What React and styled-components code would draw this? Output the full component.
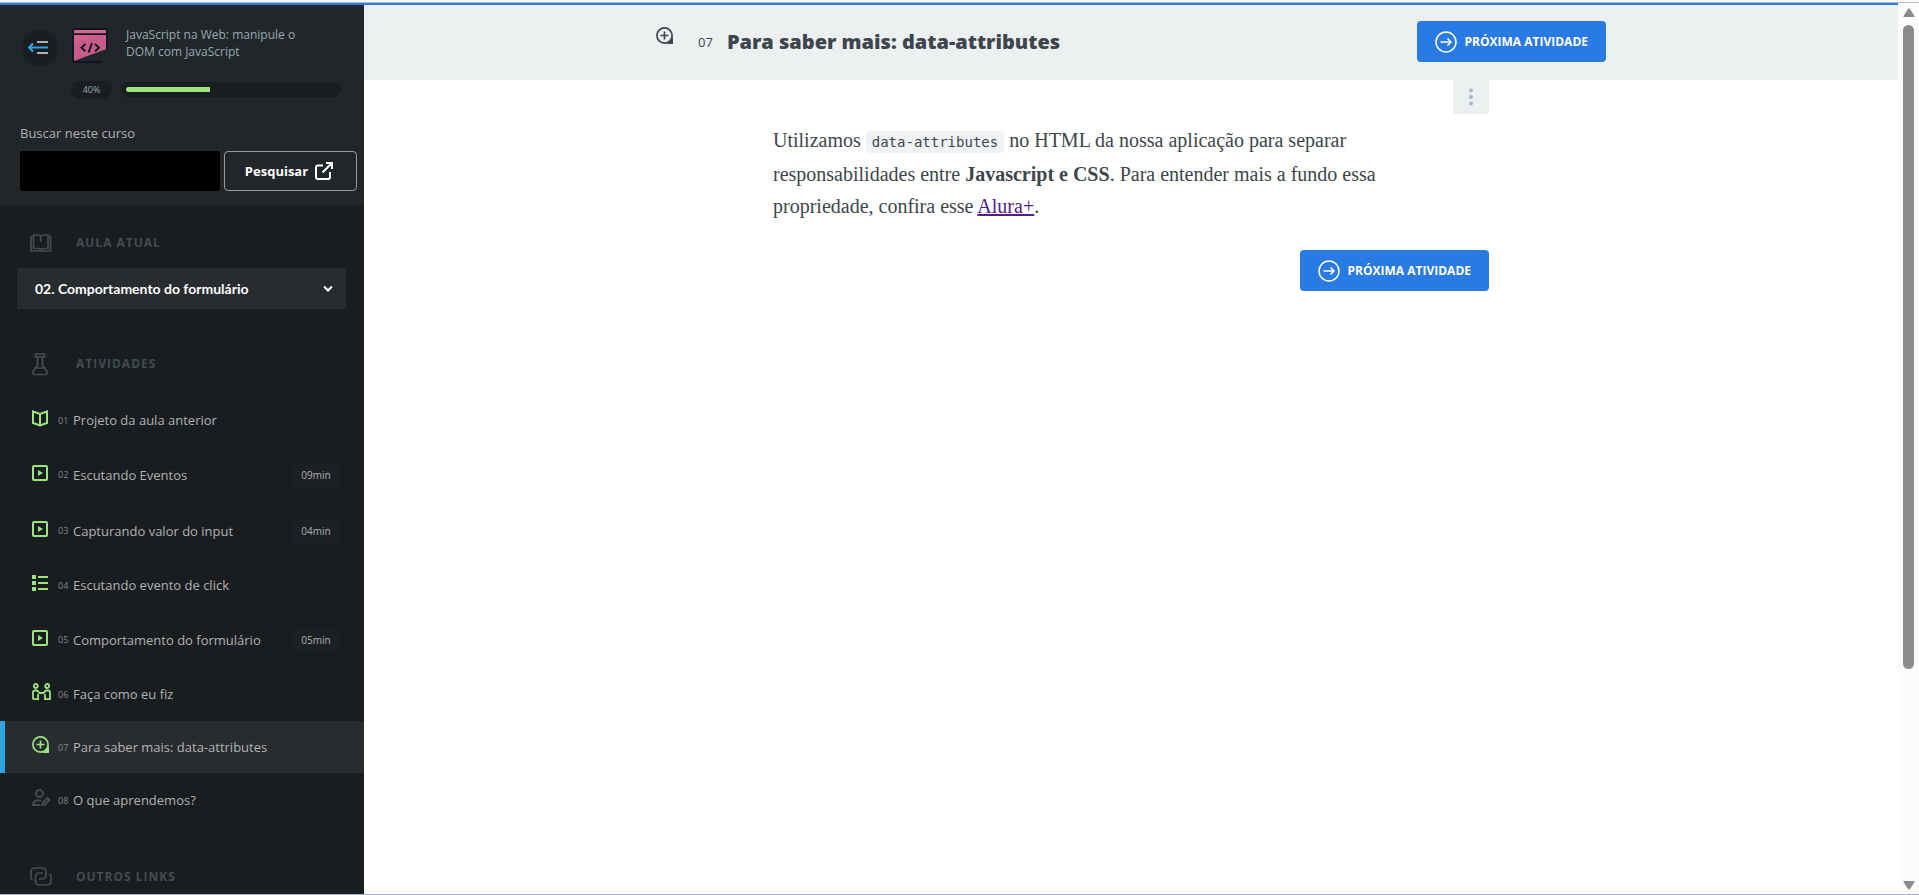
import React from 'react';
import styled, { createGlobalStyle, css } from 'styled-components';

const sans = "'Open Sans', 'Noto Sans', sans-serif";
const serif = "'Source Serif Pro', 'Liberation Serif', serif";

const colors = {
  sidebar: '#191d1f',
  sidebarTop: '#222628',
  sidebarActive: '#282c2f',
  sidebarMuted: '#434c51',
  sidebarText: '#b2b2b2',
  green: '#9be57f',
  lightBlue: '#2fa4e2',
  blue: '#2a7ae4',
  gray: '#ecf0f1',
  text: '#3d464d',
};

const GlobalStyle = createGlobalStyle`
  *,
  *::before,
  *::after {
    box-sizing: border-box;
  }

  body {
    margin: 0;
    background: #fff;
    font-family: ${sans};
    color: ${colors.text};
  }

  button,
  input,
  select {
    margin: 0;
    font-family: inherit;
  }
`;

const Page = styled.div`
  height: 100vh;
  display: flex;
  flex-direction: column;
  overflow: hidden;
  border-bottom: 1px solid #a9b0c8;
`;

const WindowEdge = styled.div`
  flex: none;
  height: 3px;
  background: #f9f9f9;
  border-bottom: 1px solid #bdbdbd;
`;

const Body = styled.div`
  flex: 1;
  min-height: 0;
  display: flex;
`;

const Course = styled.div`
  flex: 1;
  min-width: 0;
  display: flex;
  border-top: 2px solid ${colors.blue};
`;

/* Sidebar */

const Sidebar = styled.aside`
  flex: none;
  width: 364px;
  overflow: hidden;
  background: ${colors.sidebar};
`;

const SidebarTop = styled.div`
  padding: 21px 7px 15px 20px;
  background: ${colors.sidebarTop};
`;

const CourseInfo = styled.div`
  display: flex;
  padding-left: 2px;
`;

const ToggleButton = styled.button`
  flex: none;
  width: 36px;
  height: 36px;
  margin: 4px 14px 0 0;
  padding: 0;
  border: 0;
  border-radius: 50%;
  background: ${colors.sidebar};
  svg {
    display: block;
    margin: 0 auto;
  }
`;

const CourseName = styled.a`
  width: 190px;
  margin-left: 18px;
  font-size: 12px;
  line-height: 17px;
  color: #95a9b3;
  text-decoration: none;
`;

const Progress = styled.div`
  display: flex;
  align-items: center;
  gap: 9px;
  margin: 15px 16px 0 51px;
`;

const ProgressLabel = styled.span`
  width: 41px;
  border-radius: 9px;
  background: ${colors.sidebar};
  font-size: 9px;
  line-height: 17px;
  text-align: center;
  color: #95a9b3;
`;

const ProgressTrack = styled.div`
  flex: 1;
  padding: 5px;
  border-radius: 8px;
  background: ${colors.sidebar};
`;

const ProgressBar = styled.div`
  height: 5px;
  border-radius: 3px 0 0 3px;
  background: ${colors.green};
`;

const SearchForm = styled.form`
  display: flex;
  flex-wrap: wrap;
  gap: 4px;
  margin-top: 26px;
`;

const SearchLabel = styled.label`
  width: 100%;
  padding-bottom: 4px;
  font-size: 13px;
  line-height: 19px;
  color: ${colors.sidebarText};
`;

const SearchInput = styled.input`
  flex: 1;
  min-width: 0;
  height: 40px;
  padding: 0 12px;
  border: 0;
  border-radius: 3px;
  background: #000;
  color: #fff;
`;

const SearchButton = styled.button`
  display: flex;
  align-items: center;
  justify-content: center;
  gap: 6px;
  width: 133px;
  height: 40px;
  padding: 0 2px 0 0;
  border: 1px solid #989a9b;
  border-radius: 4px;
  background: transparent;
  font-size: 13px;
  font-weight: 700;
  color: #fff;
`;

const SectionTitle = styled.h2`
  display: flex;
  align-items: center;
  margin: 0;
  padding-left: 30px;
  font-size: 12px;
  font-weight: 700;
  line-height: 24px;
  letter-spacing: 1px;
  text-transform: uppercase;
  color: ${colors.sidebarMuted};
  svg {
    flex: none;
    margin-right: 24px;
  }
`;

const CurrentClass = styled.section`
  padding: 25px 18px 43px 0;
`;

const SelectBox = styled.div`
  display: grid;
  align-items: center;
  margin: 13px 0 0 17px;
  background: ${colors.sidebarActive};
  select,
  svg {
    grid-area: 1 / 1;
  }
  svg {
    justify-self: end;
    margin-right: 12px;
    pointer-events: none;
  }
`;

const ClassSelect = styled.select`
  width: 100%;
  height: 41px;
  padding: 0 32px 0 18px;
  border: 0;
  background: transparent;
  appearance: none;
  font-family: Lato, ${sans};
  font-size: 14px;
  font-weight: 700;
  color: #fff;
`;

const TaskList = styled.ul`
  display: grid;
  gap: 1px;
  margin: 18px 0 39px;
  padding: 0;
  list-style: none;
`;

const TaskLink = styled.a`
  display: flex;
  align-items: center;
  height: ${({ $timed }) => ($timed ? 55 : 52)}px;
  padding: 0 24px 0 32px;
  font-size: 13px;
  color: ${colors.sidebarText};
  text-decoration: none;
  ${({ $active }) => $active && css`
    background: ${colors.sidebarActive};
    border-left: 5px solid ${colors.lightBlue};
    padding-left: 27px;
  `}
`;

const TaskIcon = styled.span`
  flex: none;
  width: 26px;
  padding-bottom: 4px;
  line-height: 0;
  color: ${({ $done }) => ($done ? colors.green : colors.sidebarMuted)};
`;

const TaskNumber = styled.span`
  width: 15px;
  font-size: 9px;
  color: #83898c;
`;

const TaskDuration = styled.time`
  width: 48px;
  margin-left: auto;
  border-radius: 2px;
  background: #1c2023;
  font-size: 10px;
  line-height: 24px;
  text-align: center;
`;

/* Main content */

const Main = styled.main`
  flex: 1;
  min-width: 0;
  background: #fff;
`;

const TaskHeader = styled.header`
  padding: 16px 24px 18px;
  background: ${colors.gray};
`;

const HeaderContent = styled.div`
  display: flex;
  align-items: center;
  max-width: 950px;
  margin: 0 auto;
  > svg {
    margin-bottom: 11px;
  }
`;

const HeaderNumber = styled.span`
  margin: 0 14px 0 24px;
  font-size: 13px;
`;

const HeaderTitle = styled.h1`
  flex: 1;
  margin: 0;
  font-size: 20px;
  font-weight: 800;
  line-height: 28px;
`;

const NextLink = styled.a`
  display: inline-flex;
  align-items: center;
  gap: 8px;
  height: 41px;
  padding: 0 18px;
  border-radius: 4px;
  background: ${colors.blue};
  font-size: 12px;
  font-weight: 700;
  text-transform: uppercase;
  text-decoration: none;
  color: #fff;
`;

const Content = styled.div`
  display: flex;
  flex-direction: column;
  align-items: flex-end;
  max-width: 716px;
  margin: 0 auto;
`;

const MenuButton = styled.button`
  width: 36px;
  height: 34px;
  padding: 0;
  border: 0;
  border-radius: 0 0 3px 3px;
  background: ${colors.gray};
  svg {
    display: block;
    margin: 0 auto;
  }
`;

const Paragraph = styled.p`
  align-self: flex-start;
  max-width: 620px;
  margin: 10px 0 28px;
  font-family: ${serif};
  font-size: 20px;
  line-height: 32px;
  a {
    color: #551a8b;
  }
`;

const Code = styled.code`
  padding: 3px 6px;
  border-radius: 4px;
  background: #eff3f5;
  font-family: 'DejaVu Sans Mono', monospace;
  font-size: 14px;
`;

/* Page scroll bar */

const ScrollBar = styled.div`
  flex: none;
  display: flex;
  flex-direction: column;
  align-items: center;
  width: 21px;
  padding: 5px 0 4px;
  background: #fcfcfc;
`;

const ScrollTrack = styled.div`
  flex: 1;
  width: 11px;
  margin: 8px 0;
`;

const ScrollThumb = styled.div`
  border-radius: 6px;
  background: #8b8b8b;
`;

/* Icons */

const MenuFoldIcon = () => (
  <svg width="24" height="16" viewBox="1 0 24 16" fill="none">
    <path d="M10 2h11M10 13h11" stroke="#b2b2b2" strokeWidth="1.8" />
    <path d="M2 7.5h19M6 3.5l-4 4 4 4" stroke={colors.lightBlue} strokeWidth="2.2" />
  </svg>
);

const CourseLogo = () => (
  <svg width="36" height="38" viewBox="0 -2 36 38" fill="none">
    <path d="M1.5 2h33v19L2 33z" fill="#c75d86" />
    <path d="M2 2h32v4H2z" fill="#d9658f" />
    <path d="M2 7h26L2 15z" fill="#d9658f" opacity="0.6" />
    <path d="M35 22V3q0-2-2-2H3Q1 1 1 3v29q0 2 2 2h27M1 6.2h34" stroke="#0b1726" strokeWidth="1.8" />
    <path d="M13.5 16l-4 3.700 4 3.700M23 16l4 3.700-4 3.700M20 15l-3.400 9.500" stroke="#0b1726" strokeWidth="1.900" />
  </svg>
);

const ExternalIcon = () => (
  <svg width="20" height="20" viewBox="0 0 20 20" fill="none" stroke="#fff" strokeWidth="2">
    <path d="M9 4.5H4a2 2 0 0 0-2 2V16a2 2 0 0 0 2 2h10a2 2 0 0 0 2-2v-5M12 2h6v6M18 2L8.5 11.5" />
  </svg>
);

const CaretIcon = () => (
  <svg width="12" height="10" viewBox="0 0 12 10" fill="none">
    <path d="M2 2.5l4 4 4-4" stroke="#fff" strokeWidth="2" />
  </svg>
);

const BookIcon = () => (
  <svg width="22" height="20" viewBox="0 0 22 20" fill="none" stroke="currentColor" strokeWidth="1.7">
    <path d="M3.5 3.5H1V18h19.500V3.500H18" />
    <path d="M10.700 3.500Q10 2 8 2H3.500v13.500H9l1.700 1 1.700-1H18V2h-4.500q-2 0-2.800 1.500zV9" />
  </svg>
);

const FlaskIcon = () => (
  <svg width="22" height="24" viewBox="0 0 22 24" fill="none" stroke="currentColor" strokeWidth="1.7">
    <path d="M5.500 2h9v3h-9zM7.500 5v8L3 19.500q-1 3 1.500 3h11q2.500 0 1.500-3L12.500 13V5M5.500 16h9" />
  </svg>
);

const LinksIcon = () => (
  <svg width="22" height="20" viewBox="0 0 22 20" fill="none" stroke="currentColor" strokeWidth="1.7">
    <path d="M2.500 13Q1 12 1 10V5q0-4 4-4h7q4 0 4 4v3q0 4-4 4H9" />
    <path d="M13 6H9.500Q5.500 6 5.500 10v4q0 4 4 4H17q4 0 4-4v-4q0-2-1.500-3" />
  </svg>
);

const OpenBookIcon = () => (
  <svg width="16" height="18" viewBox="0 0 16 18" fill="none" stroke="currentColor" strokeWidth="2">
    <path d="M1 2.500L8 5l7-2.500v11.500L8 16.500 1 14zM8 5v11" />
  </svg>
);

const VideoIcon = () => (
  <svg width="16" height="16" viewBox="0 0 16 16" fill="none">
    <rect x="1" y="1" width="14" height="14" rx="1" stroke="currentColor" strokeWidth="2" />
    <path d="M6 5l5 3-5 3z" fill="currentColor" />
  </svg>
);

const ListIcon = () => (
  <svg width="16" height="16" viewBox="0 0 16 16" fill="currentColor">
    <path d="M0 0h4v4H0zM0 6h4v4H0zM0 12h4v4H0zM6 1h10v2H6zM6 7h10v2H6zM6 13h10v2H6z" />
  </svg>
);

const PeopleIcon = () => (
  <svg width="19" height="18" viewBox="0 0 19 18" fill="none" stroke="currentColor" strokeWidth="1.8">
    <circle cx="3.8" cy="3" r="2" />
    <circle cx="15.200" cy="3" r="2" />
    <path d="M1 16.200V9.500q0-2 2-2h1.500q1 0 1.500 1l1.500 1.500h4L13 8.500q.5-1 1.500-1H16q2 0 2 2v6.700h-5V11M1 16.200h5V11" />
  </svg>
);

const PlusBubbleIcon = () => (
  <svg width="18" height="18" viewBox="0 0 18 18" fill="none" stroke="currentColor" strokeWidth="1.7">
    <circle cx="8.5" cy="8.5" r="7.600" />
    <path d="M8.500 4.500v8M4.500 8.500h8" />
    <path d="M17 9v8H9q6-1 8-8z" fill="currentColor" stroke="none" />
  </svg>
);

const PersonEditIcon = () => (
  <svg width="19" height="18" viewBox="0 0 19 18" fill="none" stroke="currentColor" strokeWidth="2">
    <circle cx="7.5" cy="4.5" r="3.500" />
    <path d="M9 11.500H5.500Q1.500 11.500 1 16h7.500" />
    <path d="M11 13.500l4.500-4.500 2 2-4.500 4.500-2.500.5z" />
  </svg>
);

const NextIcon = () => (
  <svg width="22" height="22" viewBox="0 0 22 22" fill="none" stroke="#fff" strokeWidth="1.5">
    <circle cx="11" cy="11" r="10" />
    <path d="M5.500 11H16M12.500 7.500L16 11l-3.500 3.500" />
  </svg>
);

const DotsIcon = () => (
  <svg width="4" height="18" viewBox="0 0 4 18" fill="#a3b7c1">
    <circle cx="2" cy="2.5" r="2" />
    <circle cx="2" cy="9" r="2" />
    <circle cx="2" cy="15.5" r="2" />
  </svg>
);

const ArrowIcon = ({ down }) => (
  <svg width="12" height="9" viewBox="0 0 12 9" fill="#8b8b8b">
    <path d={down ? 'M1 0h10q1 0 .5 1L7 8q-1 1.500-2 0L.5 1Q0 0 1 0z' : 'M1 9h10q1 0 .5-1L7 1Q6-.5 5 1L.5 8Q0 9 1 9z'} />
  </svg>
);

const tasks = [
  { number: '01', name: 'Projeto da aula anterior', Icon: OpenBookIcon, done: true },
  { number: '02', name: 'Escutando Eventos', Icon: VideoIcon, done: true, duration: '09min' },
  { number: '03', name: 'Capturando valor do input', Icon: VideoIcon, done: true, duration: '04min' },
  { number: '04', name: 'Escutando evento de click', Icon: ListIcon, done: true },
  { number: '05', name: 'Comportamento do formulário', Icon: VideoIcon, done: true, duration: '05min' },
  { number: '06', name: 'Faça como eu fiz', Icon: PeopleIcon, done: true },
  { number: '07', name: 'Para saber mais: data-attributes', Icon: PlusBubbleIcon, done: true, active: true },
  { number: '08', name: 'O que aprendemos?', Icon: PersonEditIcon },
];

const Task = ({ number, name, Icon, done, active, duration }) => (
  <li>
    <TaskLink href="#" $active={active} $timed={Boolean(duration)}>
      <TaskIcon $done={done}><Icon /></TaskIcon>
      <TaskNumber>{number}</TaskNumber>
      <span>{name}</span>
      {duration && <TaskDuration>{duration}</TaskDuration>}
    </TaskLink>
  </li>
);

const NextActivity = () => (
  <NextLink href="#">
    <NextIcon />
    Próxima Atividade
  </NextLink>
);

const CourseSidebar = ({ progress }) => (
  <Sidebar>
    <SidebarTop>
      <CourseInfo>
        <ToggleButton type="button"><MenuFoldIcon /></ToggleButton>
        <CourseLogo />
        <CourseName href="#">JavaScript na Web: manipule o DOM com JavaScript</CourseName>
      </CourseInfo>
      <Progress>
        <ProgressLabel>{progress}%</ProgressLabel>
        <ProgressTrack>
          <ProgressBar style={{ width: `${progress}%` }} />
        </ProgressTrack>
      </Progress>
      <SearchForm>
        <SearchLabel htmlFor="search">Buscar neste curso</SearchLabel>
        <SearchInput id="search" type="text" />
        <SearchButton type="button">
          Pesquisar
          <ExternalIcon />
        </SearchButton>
      </SearchForm>
    </SidebarTop>
    <CurrentClass>
      <SectionTitle as="label" htmlFor="class"><BookIcon />Aula atual</SectionTitle>
      <SelectBox>
        <ClassSelect id="class">
          <option>02. Comportamento do formulário</option>
        </ClassSelect>
        <CaretIcon />
      </SelectBox>
    </CurrentClass>
    <SectionTitle><FlaskIcon />Atividades</SectionTitle>
    <TaskList>
      {tasks.map(task => <Task key={task.number} {...task} />)}
    </TaskList>
    <SectionTitle><LinksIcon />Outros links</SectionTitle>
  </Sidebar>
);

const App = () => (
  <Page>
    <GlobalStyle />
    <WindowEdge />
    <Body>
      <Course>
        <CourseSidebar progress={40} />
        <Main>
          <TaskHeader>
            <HeaderContent>
              <PlusBubbleIcon />
              <HeaderNumber>07</HeaderNumber>
              <HeaderTitle>Para saber mais: data-attributes</HeaderTitle>
              <NextActivity />
            </HeaderContent>
          </TaskHeader>
          <Content>
            <MenuButton type="button"><DotsIcon /></MenuButton>
            <Paragraph>
              Utilizamos <Code>data-attributes</Code> no HTML da nossa aplicação para separar
              responsabilidades entre <strong>Javascript e CSS</strong>. Para entender mais a fundo essa
              propriedade, confira esse <a href="#">Alura+</a>.
            </Paragraph>
            <NextActivity />
          </Content>
        </Main>
      </Course>
      <ScrollBar>
        <ArrowIcon />
        <ScrollTrack>
          <ScrollThumb style={{ height: '76%' }} />
        </ScrollTrack>
        <ArrowIcon down />
      </ScrollBar>
    </Body>
  </Page>
);

export default App;
